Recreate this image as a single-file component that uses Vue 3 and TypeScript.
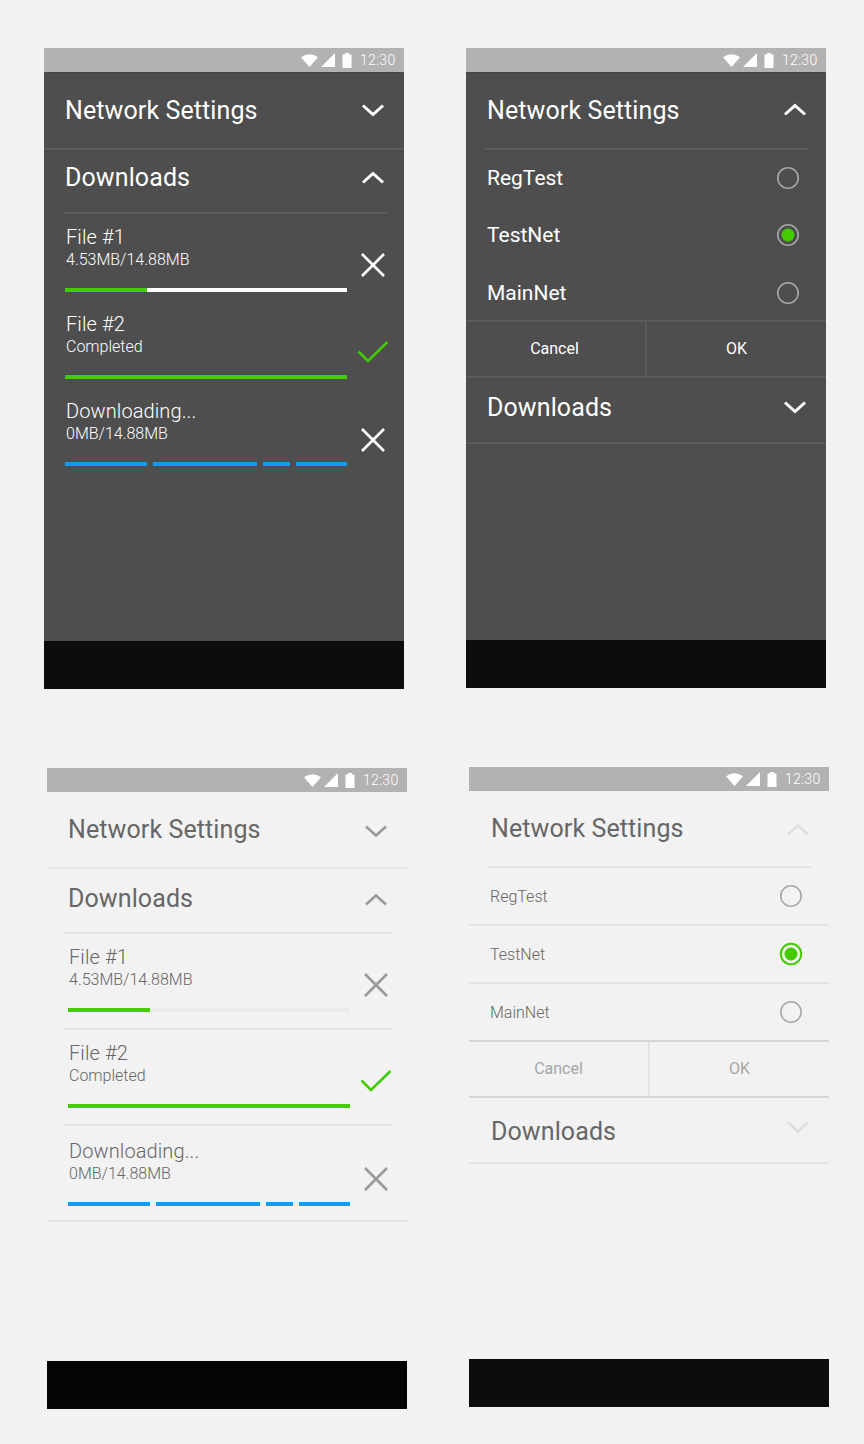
<template>
  <main class="page">
    <section
      v-for="p in phones"
      :key="p.id"
      class="phone"
      :class="[p.theme, p.view, p.id]"
    >
      <div class="status">
        <svg class="wifi" width="17" height="13" viewBox="0 0 17 13">
          <path d="M0 3.2Q8.5-2.6 17 3.2L8.5 13Z" fill="currentColor" />
        </svg>
        <svg class="signal" width="14" height="14" viewBox="0 0 14 14">
          <path d="M14 0V14H0Z" fill="currentColor" />
        </svg>
        <svg class="battery" width="10" height="15" viewBox="0 0 10 15">
          <path d="M3 0H7V1.5H9.5V15H.5V1.5H3Z" fill="currentColor" />
        </svg>
        <span class="time">12:30</span>
      </div>

      <div class="content">
        <template v-if="p.view === 'downloads'">
          <header class="head first">
            <span>Network Settings</span>
            <svg class="chev" width="24" height="14" viewBox="0 0 24 14">
              <path d="M2 2.5 12 11.5 22 2.5" />
            </svg>
          </header>
          <div class="rule"></div>
          <header class="head second">
            <span>Downloads</span>
            <svg class="chev" width="24" height="14" viewBox="0 0 24 14">
              <path d="M2 11.5 12 2.5 22 11.5" />
            </svg>
          </header>
          <div class="rule inset"></div>

          <div v-for="(f, i) in files" :key="f.name">
            <div class="file" :class="{ tail: i === files.length - 1 }">
              <div class="info">
                <div class="name">{{ f.name }}</div>
                <div class="sub">{{ f.sub }}</div>
                <div class="bar" :class="{ gapped: f.segs.length > 2 }">
                  <i
                    v-for="(s, j) in f.segs"
                    :key="j"
                    :class="s.kind"
                    :style="{ width: s.w + 'px' }"
                  ></i>
                </div>
              </div>
              <div class="action">
                <svg v-if="f.done" class="check" width="32" height="24" viewBox="0 0 32 24">
                  <path d="M1.5 11.5 11 21 30.5 2" />
                </svg>
                <svg v-else class="close" width="26" height="26" viewBox="0 0 26 26">
                  <path d="M2 2 24 24M24 2 2 24" />
                </svg>
              </div>
            </div>
            <div class="rule row-rule" :class="{ full: i === files.length - 1 }"></div>
          </div>
        </template>

        <template v-else>
          <header class="head first">
            <span>Network Settings</span>
            <svg class="chev faint" width="24" height="14" viewBox="0 0 24 14">
              <path d="M2 11.5 12 2.5 22 11.5" />
            </svg>
          </header>
          <div class="rule net-inset"></div>
          <div
            v-for="(o, i) in nets"
            :key="o.name"
            class="opt"
            :class="{ last: i === nets.length - 1 }"
          >
            <span>{{ o.name }}</span>
            <svg class="radio" :class="{ on: o.on }" width="24" height="24" viewBox="0 0 24 24">
              <circle cx="12" cy="12" r="10.2" />
              <circle v-if="o.on" class="dot" cx="12" cy="12" r="6.5" />
            </svg>
          </div>
          <div class="rule strong"></div>
          <div class="actions">
            <span>Cancel</span>
            <span class="ok">OK</span>
          </div>
          <div class="rule strong"></div>
          <header class="head third">
            <span>Downloads</span>
            <svg class="chev faint" width="24" height="14" viewBox="0 0 24 14">
              <path d="M2 2.5 12 11.5 22 2.5" />
            </svg>
          </header>
          <div class="rule"></div>
        </template>
      </div>

      <div class="nav"></div>
    </section>
  </main>
</template>

<script setup lang="ts">
type Phone = {
  id: string;
  theme: 'dark' | 'light';
  view: 'downloads' | 'network';
};
type Seg = { w: number; kind: 'green' | 'blue' | 'track' };

const phones: Phone[] = [
  { id: 'p1', theme: 'dark', view: 'downloads' },
  { id: 'p2', theme: 'dark', view: 'network' },
  { id: 'p3', theme: 'light', view: 'downloads' },
  { id: 'p4', theme: 'light', view: 'network' },
];

const files: { name: string; sub: string; done: boolean; segs: Seg[] }[] = [
  {
    name: 'File #1',
    sub: '4.53MB/14.88MB',
    done: false,
    segs: [
      { w: 82, kind: 'green' },
      { w: 200, kind: 'track' },
    ],
  },
  {
    name: 'File #2',
    sub: 'Completed',
    done: true,
    segs: [{ w: 282, kind: 'green' }],
  },
  {
    name: 'Downloading...',
    sub: '0MB/14.88MB',
    done: false,
    segs: [
      { w: 82, kind: 'blue' },
      { w: 104, kind: 'blue' },
      { w: 27, kind: 'blue' },
      { w: 51, kind: 'blue' },
    ],
  },
];

const nets = [
  { name: 'RegTest', on: false },
  { name: 'TestNet', on: true },
  { name: 'MainNet', on: false },
];
</script>

<style>
html,
body {
  background: #f2f2f2;
}
</style>

<style scoped>
.page {
  width: 864px;
  height: 1444px;
  box-sizing: border-box;
  padding: 48px 0 0 44px;
  display: grid;
  grid-template-columns: 422px 360px;
  grid-template-rows: 640px 641px;
  row-gap: 79px;
  background: #f2f2f2;
  font-family: Roboto, "Liberation Sans", sans-serif;
  overflow: hidden;
}
.phone {
  width: 360px;
  display: flex;
  flex-direction: column;
  height: 641px;
}
.p3 {
  margin: 1px 0 0 3px;
}
.p4 {
  margin-left: 3px;
}
.p2,
.p4 {
  height: 640px;
}
.dark {
  background: #4e4e4e;
  color: #fff;
}
.light {
  background: #f2f2f2;
  color: #666;
}
.status {
  height: 24px;
  flex: none;
  display: flex;
  align-items: center;
  justify-content: flex-end;
  padding-right: 9px;
  background: #b2b2b2;
  color: #fff;
}
.wifi {
  margin-right: 3px;
}
.signal {
  margin-right: 7px;
}
.battery {
  margin-right: 8px;
}
.time {
  width: 35px;
  font-size: 14px;
  font-weight: 300;
  letter-spacing: 0.3px;
  white-space: nowrap;
}
.content {
  flex: 1;
}
.dark .content {
  box-shadow: inset 0 1px 0 #454545;
}
.nav {
  height: 48px;
  flex: none;
  background: #0d0d0d;
}
.p3 .nav {
  background: #040404;
}

.head {
  display: flex;
  align-items: center;
  justify-content: space-between;
  padding: 0 19px 0 21px;
  font-size: 25px;
  letter-spacing: 0.1px;
}
.p4 .head {
  padding-left: 22px;
}
.first {
  height: 76px;
}
.second {
  height: 62px;
  padding-bottom: 8px;
  box-sizing: border-box;
}
.second .chev {
  margin-top: 2px;
}
.third {
  height: 64px;
  padding-bottom: 6px;
  box-sizing: border-box;
}
.light .first {
  height: 75px;
}
.light .second {
  height: 63px;
  padding-bottom: 4px;
}
.light .third {
  padding: 2px 19px 0 22px;
}
.light .third .chev {
  margin-bottom: 8px;
}
.chev {
  fill: none;
  stroke: #fff;
  stroke-width: 3;
}
.light .chev {
  stroke: #999;
  stroke-width: 2.6;
}
.light .chev.faint {
  stroke: #dfdfdf;
}
.light .first .chev {
  margin-top: 2px;
}

.rule {
  height: 2px;
  background: #5b5b5b;
}
.light .rule {
  background: #e3e3e3;
}
.inset {
  margin: 0 17px 0 20px;
}
.light .inset {
  margin: 0 15px 0 17px;
}
.net-inset {
  margin: 0 18px 0 19px;
}
.row-rule {
  margin: 0 15px 0 17px;
}
.dark .row-rule {
  display: none;
}
.light .row-rule.full {
  margin: 0;
}
.light .strong {
  background: #d4d4d4;
}

.file {
  display: flex;
  align-items: flex-start;
  padding: 11px 0 9px 21px;
}
.light .file {
  padding-bottom: 16px;
}
.light .file.tail {
  padding: 13px 0 14px 21px;
}
.info {
  width: 282px;
  flex: none;
}
.name {
  padding-left: 1px;
  font-size: 20px;
  font-weight: 300;
  line-height: 24px;
  letter-spacing: 0.1px;
  white-space: nowrap;
}
.sub {
  padding-left: 1px;
  font-size: 16px;
  font-weight: 300;
  line-height: 22px;
  white-space: nowrap;
}
.bar {
  display: flex;
  margin-top: 17px;
  height: 4px;
}
.bar.gapped {
  gap: 6px;
}
.bar i {
  display: block;
  height: 4px;
}
.green {
  background: #44cc00;
}
.blue {
  background: #109cf0;
}
.track {
  background: #fff;
}
.light .track {
  background: #ebebeb;
}
.action {
  width: 52px;
  height: 26px;
  margin-top: 27px;
  display: flex;
  align-items: center;
  justify-content: center;
  flex: none;
}
.dark .tail .action {
  margin-top: 28px;
}
.close {
  fill: none;
  stroke: #fff;
  stroke-width: 2.6;
}
.light .close {
  stroke: #999;
}
.check {
  fill: none;
  stroke: #44cc00;
  stroke-width: 2.6;
}

.opt {
  display: flex;
  align-items: center;
  justify-content: space-between;
  box-sizing: border-box;
  height: 57px;
  padding: 0 26px 0 21px;
  font-size: 21px;
  border-bottom: 1px solid #525252;
}
.dark .opt.last {
  height: 56px;
  padding-top: 2px;
  border-bottom: 0;
}
.light .opt {
  height: 58px;
  font-size: 16px;
  font-weight: 300;
  border-bottom: 2px solid #e3e3e3;
}
.light .opt.last {
  height: 56px;
  border-bottom: 0;
}
.radio {
  fill: none;
  stroke: #a8a8a8;
  stroke-width: 1.6;
}
.radio .dot {
  fill: #44cc00;
  stroke: none;
}
.light .radio.on {
  stroke: #44cc00;
  stroke-width: 2;
}

.actions {
  display: grid;
  grid-template-columns: 179px 1fr;
  height: 54px;
  text-align: center;
  line-height: 54px;
  font-size: 16px;
}
.dark .actions {
  color: #fff;
}
.dark .actions span:first-child {
  padding-right: 2px;
}
.light .actions {
  color: #a6a6a6;
}
.ok {
  border-left: 2px solid #5b5b5b;
}
.light .ok {
  border-left-color: #e3e3e3;
}
</style>
